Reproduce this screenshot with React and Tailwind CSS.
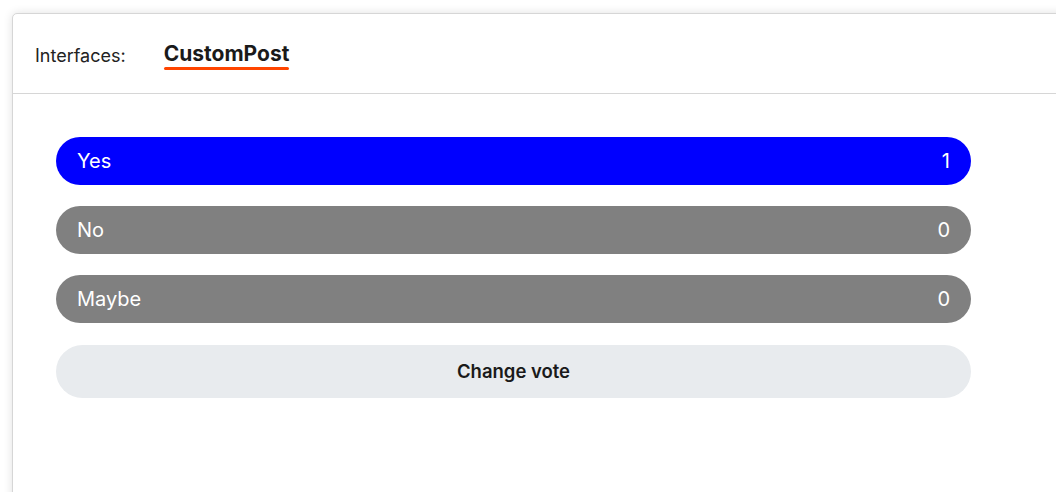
import React, { useState } from 'react';

const options = [
  { label: 'Yes', votes: 1, selected: true },
  { label: 'No', votes: 0, selected: false },
  { label: 'Maybe', votes: 0, selected: false },
];

const App = () => {
  const [items] = useState(options);

  return (
    <div className="h-[492px] w-[1056px] overflow-hidden bg-white pl-[12px] pt-[13px]" style={{ fontFamily: 'Inter, "Noto Sans", sans-serif' }}>
      <div className="h-[600px] w-[1100px] rounded-tl-[5px] border border-[#d6d6d6] bg-white shadow-[0_0_10px_rgba(0,0,0,0.12)]">
        {/* Header */}
        <div className="flex h-[80px] items-center border-b border-[#d6d6d6] pl-[22px]">
          <span className="pt-[3px] text-[18px] text-[#222]">Interfaces:</span>
          <div className="ml-[38px] flex flex-col pt-[4px]">
            <span className="text-[21px] font-bold leading-[24px] text-[#1a1a1a]">CustomPost</span>
            <div className="mt-[1px] h-[3px] w-full rounded-full bg-[#ff4500]" />
          </div>
        </div>

        {/* Poll */}
        <div className="flex w-[958px] flex-col pl-[43px] pt-[43px]">
          {items.map((opt) => (
            <div
              key={opt.label}
              className={`mb-[21px] flex h-[48px] items-center justify-between rounded-full px-[21px] text-[20px] text-white ${opt.selected ? 'bg-[#0000ff]' : 'bg-[#808080]'}`}
            >
              <span>{opt.label}</span>
              <span>{opt.votes}</span>
            </div>
          ))}
          <button className="mt-[1px] flex h-[53px] items-center justify-center rounded-full bg-[#e8ebee] text-[18.5px] font-semibold text-[#1a1a1a]">
            Change vote
          </button>
        </div>
      </div>
    </div>
  );
};

export default App;
